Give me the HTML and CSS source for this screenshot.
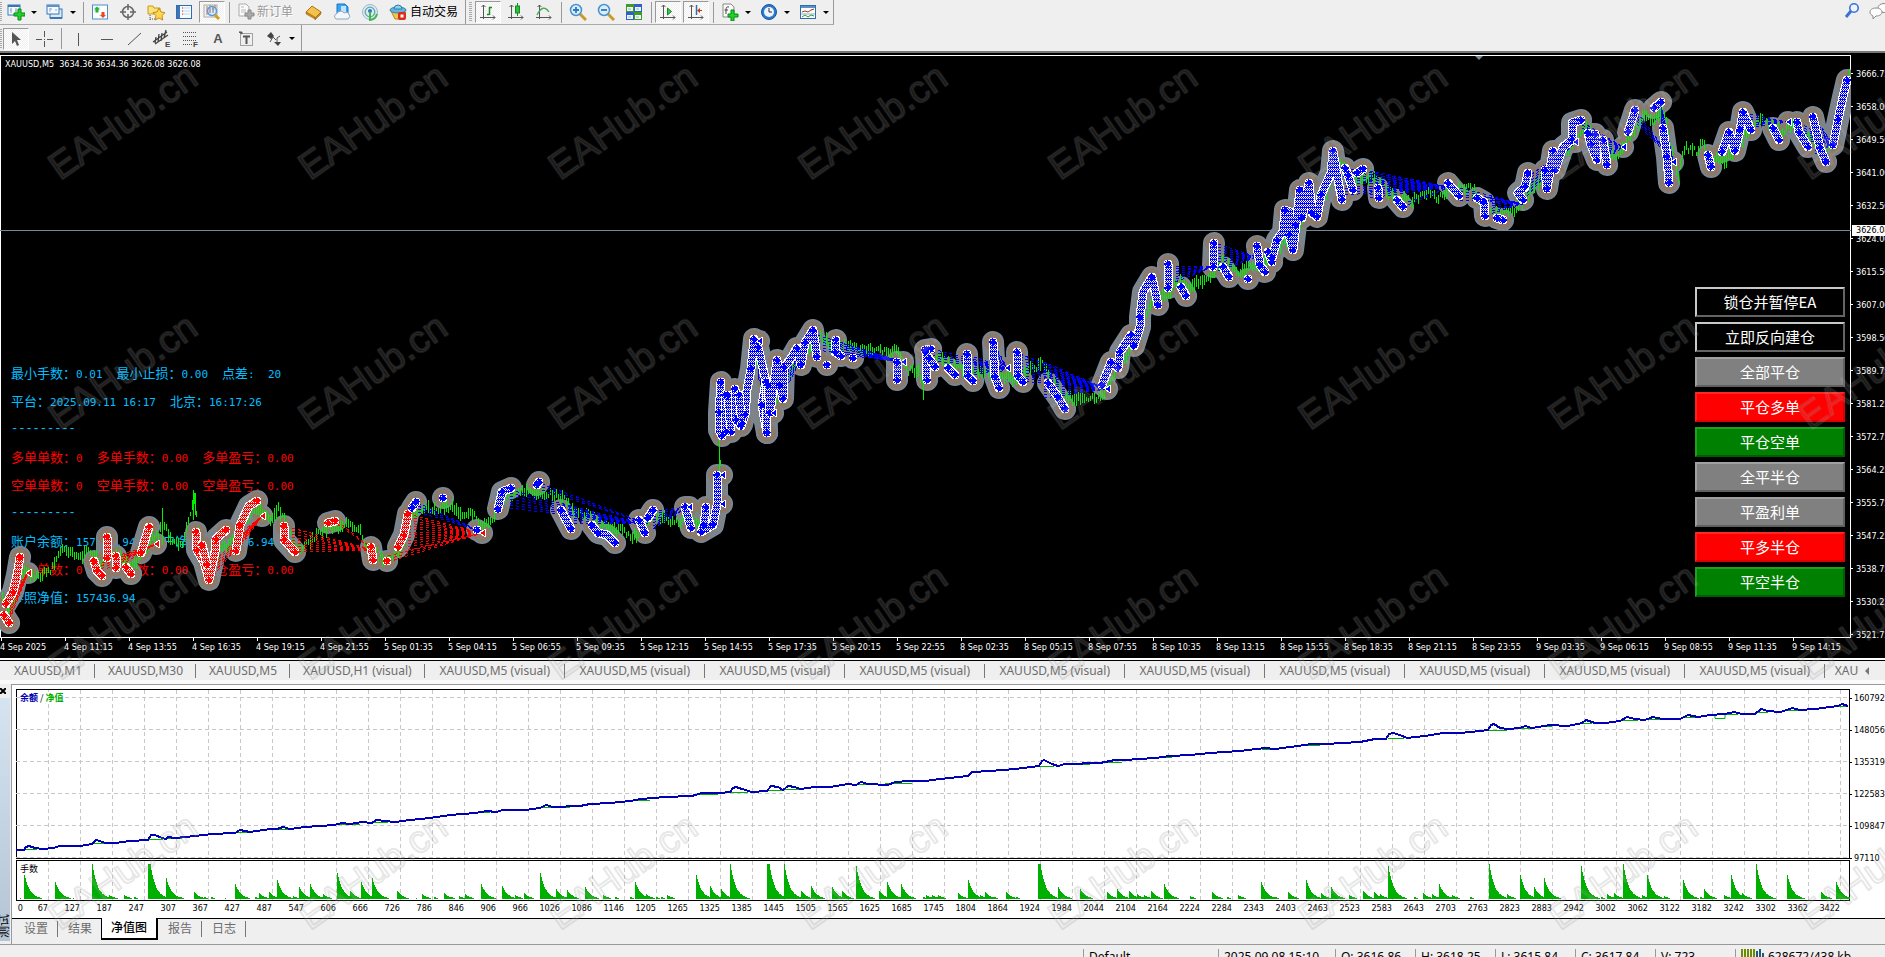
FILE: index.html
```html
<!DOCTYPE html>
<html lang="zh-CN">
<head>
<meta charset="utf-8">
<title>XAUUSD,M5</title>
<link rel="stylesheet" href="styles.css">
</head>
<body>
<header class="toolbars">
  <div class="bar bar-main">
    <div class="group">
      <i class="grip"></i>
      <button class="tool tool-drop" aria-label="新图表"><svg width="18" height="18" viewBox="0 0 18 18"><rect x="1" y="2" width="12" height="10" fill="#f4faff" stroke="#3b77b5"/><path d="M1 3h12" stroke="#3b77b5" stroke-width="2"/><path d="M4 5v5M9 5v5M3 7h2M8 8h2" stroke="#8aa7c4"/><path d="M11 6h3v4h4v3h-4v4h-3v-4H7v-3h4z" fill="#1fd32b" stroke="#078a12"/></svg><i class="caret"></i></button>
      <button class="tool tool-drop" aria-label="配置文件"><svg width="18" height="18" viewBox="0 0 18 18"><rect x="4" y="6" width="12" height="9" fill="#dcebfa" stroke="#3b77b5"/><path d="M4 15h12" stroke="#3b77b5" stroke-width="2"/><rect x="1" y="2" width="12" height="9" fill="#f4faff" stroke="#3b77b5"/><path d="M1 3h12" stroke="#5a92cc" stroke-width="2"/><path d="M4 5v4M4 6h2M9 7h2" stroke="#8aa7c4"/></svg><i class="caret"></i></button>
      <i class="sep"></i>
      <button class="tool" aria-label="市场报价"><svg width="18" height="18" viewBox="0 0 18 18"><rect x="1.500" y="2" width="15" height="14" fill="#fff" stroke="#4a90cf"/><path d="M3 5h6M3 8h5M8 12h6" stroke="#c9d6e2"/><path d="M6 3.500l3 3H7.500v3h-3v-3H3z" fill="#21b53a"/><path d="M12 15l-3-3h1.500V9h3v3H15z" fill="#e8481c"/></svg></button>
      <button class="tool" aria-label="数据窗口"><svg width="18" height="18" viewBox="0 0 18 18" fill="none" stroke="#666"><circle cx="9" cy="9" r="5.500" stroke-width="1.500"/><path d="M9 1v6M9 11v6M1 9h6M11 9h6" stroke-width="1.500"/></svg></button>
      <button class="tool" aria-label="导航"><svg width="18" height="18" viewBox="0 0 18 18"><path d="M1 3h5l1 2h6v6H1z" fill="#fbe27a" stroke="#c79a1e"/><path d="M3 12v5M3 16h5" stroke="#555" stroke-dasharray="1 1"/><path d="M12 5l2 4 4 .6-3 3 .7 4.400-3.700-2-3.700 2 .7-4.400-3-3 4-.6z" fill="#ffd84d" stroke="#c98a12"/></svg></button>
      <button class="tool" aria-label="终端"><svg width="18" height="18" viewBox="0 0 18 18"><rect x="1.500" y="2.500" width="15" height="13" fill="#f7fbff" stroke="#2f6cad"/><path d="M2 3h3v12H2z" fill="#3c76b9"/><path d="M7 5h8M7 8h8M7 11h8" stroke="#c2d5e8"/><path d="M7 5h1M7 8h1M7 11h1" stroke="#c33"/></svg></button>
      <button class="tool pressed" aria-label="策略测试"><svg width="18" height="18" viewBox="0 0 18 18"><rect x="1" y="2" width="13" height="12" fill="#f6f1ec" stroke="#b6aaa2"/><path d="M4 3v9M7 2v7M12 2v5" stroke="#9a7d77"/><circle cx="9" cy="8" r="4.500" fill="#cfe7fb" fill-opacity=".7" stroke="#5b9bd8" stroke-width="1.500"/><path d="M7 5v5M10 4v6M9 6h2" stroke="#8a7d87"/><path d="M12 12l4 4" stroke="#d59f1e" stroke-width="3"/></svg></button>
      <i class="sep"></i>
      <button class="tool tool-text" disabled><svg width="18" height="18" viewBox="0 0 18 18"><path d="M2 1h7l3 3v9H2z" fill="#fafafa" stroke="#aaa"/><path d="M4 4h3M4 7h5M4 9h5" stroke="#bbb"/><path d="M11 7h3v3h3v3h-3v3h-3v-3H8v-3h3z" fill="#aaa" stroke="#888"/></svg><span>新订单</span></button>
      <button class="tool" aria-label="语言编辑器"><svg width="18" height="18" viewBox="0 0 18 18"><path d="M7 3l9 6-6 6-9-6z" fill="#f3c24a" stroke="#a8741a"/><path d="M1 9v2l9 5v-2zM10 15l6-6v2l-6 6z" fill="#c88a22" stroke="#95630f" stroke-width=".5"/></svg></button>
      <button class="tool" aria-label="云"><svg width="18" height="18" viewBox="0 0 18 18"><path d="M4 1h8l3 3v7H4z" fill="#38a3ef" stroke="#1a76c4"/><path d="M8 3h5v7H8z" fill="#bfe3ff"/><path d="M3 16a3 3 0 0 1 1-5.500 4 4 0 0 1 7-.5 3 3 0 0 1 4 6z" fill="#f4f7fb" stroke="#8fa7c2"/></svg></button>
      <button class="tool" aria-label="信号"><svg width="18" height="18" viewBox="0 0 18 18" fill="none"><circle cx="9" cy="9" r="7.500" fill="#dcebf3" stroke="#9fb9cc"/><circle cx="9" cy="9" r="4.800" stroke="#5fa8a0" stroke-width="1.300"/><circle cx="9" cy="8" r="2" fill="#3178c6"/><path d="M9 9v8a8 8 0 0 0 7-6" stroke="#41b649" stroke-width="2"/></svg></button>
      <button class="tool tool-text tool-auto"><svg width="18" height="18" viewBox="0 0 18 18"><path d="M2 8l4 8h6l5-7z" fill="#f1c94a" stroke="#b4861b"/><ellipse cx="9" cy="7" rx="8" ry="3" fill="#69b4dc" stroke="#2f81ad"/><path d="M5 6a4 4 0 0 1 8 0z" fill="#8fd0ef" stroke="#2f81ad"/><rect x="9" y="9" width="8" height="8" rx="2" fill="#dd2d16"/><rect x="11.500" y="11.500" width="3" height="3" fill="#fff"/></svg><span>自动交易</span></button>
    </div>
    <div class="group">
      <i class="grip"></i>
      <button class="tool pressed" aria-label="柱状图"><svg width="18" height="18" viewBox="0 0 18 18" fill="none"><path d="M4.500 2v14M1 14.500h15M2.500 4l2-2 2 2M14 12.500l2 2-2 2" stroke="#555"/><path d="M10.500 4v8M10 4.500h3M8 11.500h2" stroke="#188a22" stroke-width="1.500"/></svg></button>
      <button class="tool" aria-label="蜡烛图"><svg width="18" height="18" viewBox="0 0 18 18" fill="none"><path d="M4.500 2v14M1 14.500h15M2.500 4l2-2 2 2M14 12.500l2 2-2 2" stroke="#555"/><path d="M10.500 0v13" stroke="#188a22"/><rect x="8.500" y="3" width="4" height="7" fill="#25c437" stroke="#188a22"/></svg></button>
      <button class="tool" aria-label="折线图"><svg width="18" height="18" viewBox="0 0 18 18" fill="none"><path d="M4.500 2v14M1 14.500h15M2.500 4l2-2 2 2M14 12.500l2 2-2 2" stroke="#555"/><path d="M2 12q6-12 12-3" stroke="#4ba852" stroke-width="1.300"/></svg></button>
      <i class="sep"></i>
      <button class="tool" aria-label="放大"><svg width="18" height="18" viewBox="0 0 18 18"><path d="M11 11l6 6" stroke="#c99a27" stroke-width="3"/><circle cx="7" cy="7" r="5.500" fill="#d9eefb" stroke="#4a90cf" stroke-width="1.500"/><path d="M4 7h6M7 4v6" stroke="#2f79bd" stroke-width="1.800"/></svg></button>
      <button class="tool" aria-label="缩小"><svg width="18" height="18" viewBox="0 0 18 18"><path d="M11 11l6 6" stroke="#c99a27" stroke-width="3"/><circle cx="7" cy="7" r="5.500" fill="#d9eefb" stroke="#4a90cf" stroke-width="1.500"/><path d="M4 7h6" stroke="#2f79bd" stroke-width="1.800"/></svg></button>
      <button class="tool" aria-label="平铺"><svg width="18" height="18" viewBox="0 0 18 18"><path d="M1 1h8v8H1zM9 9h8v8H9z" fill="#3f9b28"/><path d="M9 1h8v8H9zM1 9h8v8H1z" fill="#2d62c4"/><path d="M2 4h6v4H2zM10 4h6v4h-6zM2 12h6v4H2zM10 12h6v4h-6z" fill="#eef5fb"/><path d="M3 6h3M11 6h3M3 14h3M11 14h3" stroke="#9bb"/></svg></button>
      <i class="sep"></i>
      <button class="tool pressed" aria-label="自动滚动"><svg width="18" height="18" viewBox="0 0 18 18" fill="none"><path d="M4.500 2v14M1 14.500h15M2.500 4l2-2 2 2M14 12.500l2 2-2 2" stroke="#555"/><path d="M8.500 5l4 3.500-4 3.500z" fill="#36c947" stroke="#188a22"/></svg></button>
      <button class="tool pressed" aria-label="图表平移"><svg width="18" height="18" viewBox="0 0 18 18" fill="none"><path d="M4.500 2v14M1 14.500h15M2.500 4l2-2 2 2M14 12.500l2 2-2 2" stroke="#555"/><path d="M9.500 2v10" stroke="#2f6cad" stroke-width="1.500"/><path d="M15 7.500h-3" stroke="#c33d10"/><path d="M13 5v5l-3-2.500z" fill="#c33d10"/></svg></button>
      <i class="sep"></i>
      <button class="tool tool-drop" aria-label="指标"><svg width="18" height="18" viewBox="0 0 18 18"><path d="M2 1h8l3 3v10H2z" fill="#fafafa" stroke="#888"/><path d="M8 4q-3-1-3 3v4M3.500 7H7" fill="none" stroke="#444"/><path d="M10 7h3v4h4v3h-4v4h-3v-4H7v-3h3z" fill="#1fd32b" stroke="#078a12"/></svg><i class="caret"></i></button>
      <button class="tool tool-drop" aria-label="周期"><svg width="18" height="18" viewBox="0 0 18 18"><circle cx="9" cy="9" r="7.500" fill="#2b7ad2" stroke="#15549d"/><circle cx="9" cy="9" r="5" fill="#edf5fc"/><path d="M9 5v4h3" fill="none" stroke="#333"/></svg><i class="caret"></i></button>
      <button class="tool tool-drop" aria-label="模板"><svg width="18" height="18" viewBox="0 0 18 18" fill="none"><rect x="1.500" y="2.500" width="15" height="13" fill="#fff" stroke="#2f6cad"/><path d="M2 4h14" stroke="#5a92cc" stroke-width="2"/><path d="M3 9l3-1 3 1 3-2 3-1" stroke="#a33b1b"/><path d="M2 11h14" stroke="#9ab"/><path d="M3 14l3-2 3 2 3-2 3 1" stroke="#2b9b3b"/></svg><i class="caret"></i></button>
    </div>
    <div class="corner">
      <button class="tool" aria-label="搜索"><svg width="18" height="18" viewBox="0 0 18 18" fill="none"><circle cx="11" cy="6" r="4.200" fill="#eef4ff" stroke="#3a72d4" stroke-width="1.600"/><path d="M8 9l-5 6" stroke="#3a72d4" stroke-width="3"/></svg></button>
      <button class="tool" aria-label="消息"><svg width="22" height="18" viewBox="0 0 22 18" fill="#fdfdfd" stroke="#8a8a8a"><ellipse cx="15" cy="6" rx="6" ry="4.500"/><path d="M7 6c4 0 6 2 6 4s-2 4-6 4l-3 3v-3c-2-1-3-2-3-4s2-4 6-4z"/></svg></button>
    </div>
  </div>
  <div class="bar bar-draw">
    <div class="group">
      <i class="grip"></i>
      <button class="tool pressed" aria-label="光标"><svg width="18" height="18" viewBox="0 0 18 18"><path d="M5 2v12l3-3 2 5 2-1-2-5h4z" fill="#555"/></svg></button>
      <button class="tool" aria-label="十字线"><svg width="18" height="18" viewBox="0 0 18 18" stroke="#555"><path d="M9.500 1v6M9.500 11v6M1 9.500h6M12 9.500h6M9 9.500h1"/></svg></button>
      <i class="sep"></i>
      <button class="tool" aria-label="垂直线"><svg width="18" height="18" viewBox="0 0 18 18" stroke="#555"><path d="M9.500 3v13"/></svg></button>
      <button class="tool" aria-label="水平线"><svg width="18" height="18" viewBox="0 0 18 18" stroke="#555"><path d="M4 9.500h12"/></svg></button>
      <button class="tool" aria-label="趋势线"><svg width="18" height="18" viewBox="0 0 18 18" stroke="#555"><path d="M3 15L16 3"/></svg></button>
      <button class="tool" aria-label="等距通道"><svg width="20" height="20" viewBox="0 0 20 20" stroke="#444"><path d="M1 13L15 3M3 15L16 6M4 8l-1 6M7 5l-1 8M10 4l-1 8M14 1l-2 8" stroke-width="1.300"/><text x="13" y="18" class="tiny">E</text></svg></button>
      <button class="tool" aria-label="斐波纳契"><svg width="20" height="20" viewBox="0 0 20 20" stroke="#555"><path d="M3 3.500h14M3 7.500h14M3 11.500h14M3 15.500h9" stroke-dasharray="1 1"/><text x="13" y="18" class="tiny">F</text></svg></button>
      <button class="tool glyph">A</button>
      <button class="tool" aria-label="文本标签"><svg width="18" height="18" viewBox="0 0 18 18" fill="none" stroke="#555"><rect x="3.500" y="3.500" width="12" height="12" stroke-dasharray="1 1"/><path d="M6 6.500h7M9.500 6v8" stroke-width="2"/><path d="M2 2h3v2z" fill="#555"/></svg></button>
      <button class="tool tool-drop" aria-label="箭头"><svg width="18" height="18" viewBox="0 0 18 18"><path d="M2 6l4-4 3 4-3 3zM9 12h7l-3 4z" fill="#444"/><path d="M5 12l3-5 3 3M12 13V8l3-2" stroke="#555" fill="none"/></svg><i class="caret"></i></button>
    </div>
  </div>
</header>

<main class="chart">
  <section class="plot">
    <p class="quote">XAUUSD,M5&nbsp; 3634.36 3634.36 3626.08 3626.08</p>
    <div class="info">
      <p><span>最小手数：<b>0.01</b></span><span>最小止损：<b>0.00</b></span><span>点差<b>:&nbsp; 20</b></span></p>
      <p><span>平台：<b>2025.09.11 16:17</b></span><span>北京：<b>16:17:26</b></span></p>
      <p class="rule">---------</p>
      <p class="hot"><span>多单单数：<b>0</b></span><span>多单手数：<b>0.00</b></span><span>多单盈亏：<b>0.00</b></span></p>
      <p class="hot"><span>空单单数：<b>0</b></span><span>空单手数：<b>0.00</b></span><span>空单盈亏：<b>0.00</b></span></p>
      <p class="rule">---------</p>
      <p><span>账户余额：<b>157436.94</b></span><span>账户净值：<b>157436.94</b></span></p>
      <p class="hot"><span>持仓单数：<b>0</b></span><span>持仓手数：<b>0.00</b></span><span>持仓盈亏：<b>0.00</b></span></p>
      <p><span>参照净值：<b>157436.94</b></span></p>
    </div>
    <svg class="trades" id="trades" viewBox="0 55 1851 583" preserveAspectRatio="none">
      <defs>
        <pattern id="blueMesh" width="2" height="4" patternUnits="userSpaceOnUse"><path d="M0 0h2v4H0z" fill="#fff"/><path d="M0 0h1v1H0zM1 1h1v1H1zM0 2h1v1H0zM0 3h2v1H0z" fill="#00f"/></pattern>
        <pattern id="redMesh" width="2" height="4" patternUnits="userSpaceOnUse"><path d="M0 0h2v4H0z" fill="#fff"/><path d="M0 0h1v1H0zM1 1h1v1H1zM0 2h1v1H0zM0 3h2v1H0z" fill="#f00"/></pattern>
        <pattern id="haloMesh" width="3" height="3" patternUnits="userSpaceOnUse"><path d="M0 0h3v3H0z" fill="#778899"/><path d="M0 0h1v1H0zM1 1h1v1H1zM2 2h1v1H2z" fill="#8b7969"/></pattern>
      </defs>
      <path d="M0 230.500H1851" stroke="#778899"/>
      <path d="M1475 56h8l-4 4z" fill="#778899"/>
    </svg>
    <div class="orders">
      <button class="order dark">锁仓并暂停EA</button>
      <button class="order dark">立即反向建仓</button>
      <button class="order gray">全部平仓</button>
      <button class="order red">平仓多单</button>
      <button class="order green">平仓空单</button>
      <button class="order gray">全平半仓</button>
      <button class="order gray">平盈利单</button>
      <button class="order red">平多半仓</button>
      <button class="order green">平空半仓</button>
    </div>
  </section>
  <div class="prices" id="prices"><b class="now">3626.08</b></div>
  <div class="times" id="times"></div>
</main>

<nav class="charts-tabs" id="chartTabs"></nav>

<section class="tester">
  <aside class="side"><button class="close" aria-label="关闭"><svg width="6" height="6" viewBox="0 0 6 6"><path d="M0 0l6 6M6 0L0 6" stroke="#000" stroke-width="2"/></svg></button><div class="side-title"><span>测试</span></div></aside>
  <div class="tester-body">
    <div class="graph">
      <div class="equity">
        <svg id="equity" viewBox="16 689 1834 170" preserveAspectRatio="none"></svg>
        <p class="legend"><span class="bal">余额</span> / <span class="eq">净值</span></p>
      </div>
      <div class="levels"><span>160792</span><span>148056</span><span>135319</span><span>122583</span><span>109847</span><span>97110</span></div>
      <div class="lots">
        <svg id="lots" viewBox="16 860 1834 41" preserveAspectRatio="none"></svg>
        <p class="legend">手数</p>
      </div>
      <div class="counts" id="counts"></div>
    </div>
    <nav class="tester-tabs">
      <button>设置</button><button>结果</button><button class="active">净值图</button><button>报告</button><button>日志</button>
    </nav>
  </div>
</section>

<footer class="status">
  <span class="w1">Default</span><span class="w2">2025.09.08 15:10</span><span class="w3">O: 3616.86</span><span class="w3">H: 3618.25</span><span class="w3">L: 3615.84</span><span class="w3">C: 3617.84</span><span class="w3">V: 723</span><span class="w4"><svg width="24" height="12" viewBox="0 0 24 12"><path d="M1 0v12M4 0v12M7 0v12M10 0v12M13 0v12" stroke="#6b8e00" stroke-width="2"/><path d="M16 2v10M19 0v12M22 4v8" stroke="#1f5a78" stroke-width="2"/></svg>628672/438 kb</span>
</footer>

<svg class="marks" id="marks" aria-hidden="true"></svg>
<script src="app.js"></script>
</body>
</html>
```
FILE: styles.css
```css
* { box-sizing: border-box; }
body {
  margin: 0;
  height: 100vh;
  overflow: hidden;
  position: relative;
  display: flex;
  flex-direction: column;
  background: #efefef;
  color: #000;
  font: 12px/16px "Noto Sans", "Noto Sans CJK SC", sans-serif;
}
p { margin: 0; }
button {
  margin: 0;
  padding: 0;
  border: 0;
  background: none;
  color: inherit;
  font: inherit;
}

/* toolbars */
.toolbars { flex: none; border-bottom: 2px solid #777; }
.bar { display: flex; }
.bar-main { height: 25px; }
.bar-draw { height: 26px; }
.group {
  display: flex;
  align-items: center;
  border-right: 1px solid #999;
  border-bottom: 1px solid #aaa;
}
.bar-main .group + .group { padding-left: 3px; }
.bar-draw .group { border-bottom: 0; padding-right: 2px; padding-top: 1px; }
.grip { width: 2px; height: 20px; background: repeating-linear-gradient(#aaa 0 1px, #efefef 1px 2px); }
.bar-main .group + .group .grip { width: 3px; margin-right: 2px; }
.tool {
  display: flex;
  align-items: center;
  justify-content: center;
  flex: none;
  width: 28px;
  height: 22px;
}
.tool svg { display: block; flex: none; }
.pressed {
  width: 26px;
  margin: 0 1px;
  background: repeating-conic-gradient(#fff 0 25%, #efefef 0 50%) 0 0 / 2px 2px;
  border: 1px solid #fff;
  border-top-color: #999;
  border-left-color: #999;
}
.tool-drop { width: 39px; justify-content: flex-start; padding-left: 5px; gap: 6px; }
.caret { border: 3px solid transparent; border-top-color: #000; border-bottom: 0; }
.sep { width: 1px; height: 21px; margin: 0 2px 0 3px; background: #999; }
.tool-text { width: 68px; justify-content: flex-start; padding-left: 5px; gap: 2px; }
.tool-text:disabled { color: #999; text-shadow: 1px 1px #fff; }
.tool-auto { width: 81px; gap: 3px; }
.tiny { font: bold 8px "Liberation Sans", sans-serif; fill: #444; stroke: none; }
.glyph { font: bold 13px "Liberation Sans", sans-serif; color: #555; }
.corner { display: flex; margin-left: auto; margin-right: -9px; }

/* price chart */
.chart {
  flex: 1;
  min-height: 0;
  display: grid;
  grid-template: minmax(0, 1fr) 20px / minmax(0, 1fr) 34px;
  padding-top: 2px;
  background: #000;
  color: #fff;
  font: 9px/12px "DejaVu Sans Condensed", "DejaVu Sans", sans-serif;
}
.plot { position: relative; border: 1px solid #fff; }
.quote { padding: 2px 4px; }
.trades { position: absolute; inset: -1px; width: calc(100% + 2px); height: calc(100% + 2px); }
.info {
  position: absolute;
  left: 10px;
  top: 303px;
  color: #00bfff;
  font: 13px/28px "Noto Sans CJK SC", sans-serif;
}
.info p { display: flex; gap: 14px; height: 28px; white-space: nowrap; }
.info b { font: 11px/26px "DejaVu Sans Mono", monospace; }
.info .hot { color: #f00; }
.info .rule { font: 12px/28px "Liberation Mono", monospace; }
.orders {
  position: absolute;
  top: 231px;
  right: 5px;
  display: grid;
  gap: 5px;
  width: 150px;
}
.order { height: 30px; border: 2px solid; color: #fff; font: 15px/24px "Noto Sans CJK SC", sans-serif; }
.dark { background: #000; border-color: #c8c8c8 #646464 #646464 #c8c8c8; }
.gray { background: #808080; border-color: #a0a0a0 #606060 #606060 #a0a0a0; }
.red { background: #f00; border-color: #ff2828 #d80000 #d80000 #ff2020; }
.green { background: #008000; border-color: #20a020 #006000 #006000 #20a020; }
.prices {
  position: relative;
  display: grid;
  grid-auto-rows: 33px;
  align-content: start;
  padding-top: 2px;
}
.prices span { display: flex; align-items: center; gap: 3px; }
.prices span::before { content: ""; width: 2px; height: 1px; background: #fff; }
.now { position: absolute; top: 170px; left: 1px; right: 0; height: 11px; padding-left: 4px; background: #fff; color: #000; font-weight: 400; line-height: 11px; }
.times { grid-column: 1 / -1; display: flex; }
.times span { flex: 0 0 64px; white-space: nowrap; padding-top: 3px; position: relative; }
.times span::before { content: ""; position: absolute; left: 1px; top: 0; width: 1px; height: 3px; background: #fff; }

/* chart tabs */
.charts-tabs {
  flex: none;
  position: relative;
  display: flex;
  align-items: center;
  height: 26px;
  padding: 1px 26px 4px 1px;
  border-top: 2px solid #fff;
  box-shadow: inset 0 1px #000, inset 0 -4px #fafafa;
  overflow: hidden;
  color: #6d6d6d;
}
.charts-tabs button { flex: none; padding: 0 12px 0 13px; line-height: 14px; border-right: 1px solid #777; white-space: nowrap; }
.charts-tabs .visual { width: 140px; }
.charts-tabs button:last-of-type { flex: 1 1 0; min-width: 0; width: auto; overflow: hidden; padding: 0 0 0 10px; border: 0; text-align: left; }
.scroll-left { position: absolute; right: 16px; border: 4px solid transparent; border-right-color: #777; border-left: 0; }

/* tester */
.tester { flex: none; display: flex; height: 261px; border-bottom: 1px solid #999; }
.side { display: flex; flex-direction: column; width: 11px; flex: none; }
.close { height: 14px; display: flex; align-items: center; }
.side-title {
  flex: 1;
  margin: 0 1px 3px 0;
  background: linear-gradient(#d6e4f1, #b4c4d4);
  display: flex;
  align-items: flex-end;
  overflow: hidden;
}
.side-title span { writing-mode: vertical-rl; text-orientation: sideways; transform: rotate(180deg); font-size: 12px; line-height: 12px; padding-top: 3px; margin-left: -2px; }
.tester-body { flex: 1; min-width: 0; border-left: 1px solid #999; border-top: 1px solid #999; }
.graph {
  display: grid;
  grid-template: 170px 41px 16px / minmax(0, 1fr) 35px;
  row-gap: 1px;
  padding: 4px 0 0 4px;
  background: #fff;
  border-bottom: 1px solid #000;
  font: 9px/12px "DejaVu Sans Condensed", "DejaVu Sans", "Noto Sans CJK SC", sans-serif;
}
.equity, .lots { position: relative; border: 1px solid #000; }
.equity svg, .lots svg { position: absolute; inset: -1px; width: calc(100% + 2px); height: calc(100% + 2px); }
.legend { position: relative; width: max-content; margin: 2px 3px; background: #fff; font: 9px/12px "Noto Sans CJK SC", sans-serif; }
.bal { color: #0000b4; font-weight: 700; }
.eq { color: #00b000; font-weight: 700; }
.levels { display: grid; grid-auto-rows: 32px; align-content: start; margin: -7px 0 -20px; }
.levels span { display: flex; align-items: center; gap: 2px; }
.levels span::before { content: ""; width: 2px; height: 1px; background: #000; }
.lots { grid-column: 1; }
.counts { grid-column: 1 / -1; display: flex; }
.counts span { flex: 0 0 32px; text-align: right; }
.counts span:first-child { flex-basis: 7px; }
.counts span:nth-child(2) { flex-basis: 25px; }
.tester-tabs { display: flex; height: 21px; padding-left: 2px; color: #6d6d6d; }
.tester-tabs button { padding: 0 9px 0 10px; height: 16px; margin-top: 2px; border-right: 1px solid #777; }
.tester-tabs button:nth-child(2) { border-right: 0; }
.tester-tabs .active { height: 22px; margin-top: -1px; padding: 2px 9px; background: #fff; color: #000; border: 1px solid #000; border-top: 0; border-right-width: 2px; border-bottom-width: 2px; font-weight: 500; }

/* status bar */
.status { flex: none; display: flex; justify-content: flex-end; height: 12px; padding-top: 4px; }
.status span { flex: none; display: flex; gap: 3px; height: 20px; padding-left: 5px; border-left: 1px solid #999; white-space: nowrap; }
.w1 { width: 135px; }
.w2 { width: 117px; }
.w3 { width: 80px; }
.w4 { width: 150px; }

/* watermark */
.marks { position: absolute; inset: 0; width: 100%; height: 100%; pointer-events: none; }
.marks text {
  font: 38px "Liberation Sans", Arial, sans-serif;
  fill: rgba(255, 255, 255, .1);
  stroke: rgba(128, 128, 128, .2);
  stroke-width: 2px;
  stroke-linejoin: round;
}
```
FILE: app.js
```javascript
const NS = "http://www.w3.org/2000/svg";
const byId = id => document.getElementById(id);
function draw(parent, tag, attrs, text) {
  const el = document.createElementNS(NS, tag);
  for (const k in attrs) el.setAttribute(k, attrs[k]);
  if (text) el.textContent = text;
  parent.appendChild(el);
  return el;
}
function addText(parent, tag, text) {
  const el = document.createElement(tag);
  el.textContent = text;
  parent.appendChild(el);
  return el;
}
const points = s => s.trim().split(/\s+/).map(p => p.split(",").map(Number));
const toPath = pts => "M" + pts.map(p => p.join(" ")).join("L");

/* axis labels */
"3666.75 3658.00 3649.50 3641.00 3632.50 3624.00 3615.50 3607.00 3598.50 3589.75 3581.25 3572.75 3564.25 3555.75 3547.25 3538.75 3530.25 3521.75"
  .split(" ").forEach(t => byId("prices").insertBefore(Object.assign(document.createElement("span"), { textContent: t }), byId("prices").lastElementChild));
const days = {
  "4 Sep": "2025 11:15 13:55 16:35 19:15 21:55",
  "5 Sep": "01:35 04:15 06:55 09:35 12:15 14:55 17:35 20:15 22:55",
  "8 Sep": "02:35 05:15 07:55 10:35 13:15 15:55 18:35 21:15 23:55",
  "9 Sep": "03:35 06:15 08:55 11:35 14:15"
};
for (const d in days) days[d].split(" ").forEach(t => addText(byId("times"), "span", d + " " + t));
"0 67 127 187 247 307 367 427 487 547 606 666 726 786 846 906 966 1026 1086 1146 1205 1265 1325 1385 1445 1505 1565 1625 1685 1745 1804 1864 1924 1984 2044 2104 2164 2224 2284 2343 2403 2463 2523 2583 2643 2703 2763 2823 2883 2942 3002 3062 3122 3182 3242 3302 3362 3422"
  .split(" ").forEach(t => addText(byId("counts"), "span", t));

/* chart tabs */
["XAUUSD,M1", "XAUUSD,M30", "XAUUSD,M5", "XAUUSD,H1 (visual)"]
  .forEach(t => addText(byId("chartTabs"), "button", t));
for (let i = 0; i < 10; i++) addText(byId("chartTabs"), "button", "XAUUSD,M5 (visual)").className = "visual";
addText(byId("chartTabs"), "button", "XAUUSD,M5 (visual)");
addText(byId("chartTabs"), "i", "").className = "scroll-left";

/* trades: runs of entries, r = red, b = blue; "<" marks an exit */
const runs = [
  ["r", "4,615 9,623"], ["r", "6,604 13,592 17,575 20,557"], ["r<", "28,573"],
  ["r", "94,561 97,571 102,576"], ["r", "107,537 107,558"], ["r", "116,556 116,568"],
  ["r", "126,567 131,574"], ["r", "141,553 149,527"], ["r<", "156,544"],
  ["r", "196,532 197,550 204,562 209,580 215,552 216,539 226,530"], ["r", "202,545 207,565"],
  ["r", "236,551 240,525 249,506 257,501"], ["r<", "262,516"],
  ["r", "284,526 284,540 295,552"], ["r", "328,523 335,521"], ["r", "371,547 373,560"], ["r", "387,561"],
  ["r", "398,547 404,535 408,514"], ["b", "412,508 416,502"],
  ["b", "443,498"], ["b", "477,530"], ["r<", "482,533"],
  ["b", "498,509 502,492 511,488"], ["b", "537,485 539,482"], ["b", "561,510 571,529"],
  ["b", "592,525 598,533 607,535 615,543"], ["b", "639,520 645,533"], ["b", "648,518 653,510"],
  ["b", "685,507 691,528"], ["b<", "689,507"],
  ["b", "706,507 704,525 701,532 713,525 717,505 717,475"], ["b<", "722,475"], ["b<", "722,504"],
  ["b", "721,382 719,412 719,430 722,436"], ["b", "725,395 726,432"], ["b", "728,395 731,432"],
  ["b", "735,389 736,420 741,426 745,415 747,390 751,369 754,339 758,347 766,382 762,405 767,433"],
  ["b", "766,382 767,433"], ["b", "739,395 742,424"],
  ["b", "768,385 770,413 777,360 780,385 783,399 784,367 790,360 797,348 801,365 805,343 813,330 817,357"], ["b<", "773,413"], ["b<", "759,341"],
  ["b", "827,365"], ["b", "836,340 835,352 841,356"], ["b", "853,358"],
  ["b", "897,362 897,380"], ["b<", "903,362"], ["b", "925,350 931,349"], ["b", "926,352 927,380"], ["b", "929,358 935,367"],
  ["b", "948,368 955,375"], ["b", "967,354 968,376 973,381"], ["b", "993,342 995,377 999,388"], ["b<", "1007,368"],
  ["b", "1017,352 1018,376 1023,382"], ["b", "1048,383 1058,397 1065,409"],
  ["b<", "1107,389"], ["b", "1102,385 1111,362 1118,368 1120,352 1131,335 1134,346 1140,327 1140,317 1143,292 1152,277 1158,305"],
  ["b", "1168,264 1168,288"], ["b", "1181,287 1186,296"], ["b", "1214,243 1213,267"], ["b", "1223,267 1229,277"],
  ["b", "1248,279"], ["b", "1257,246 1260,265 1265,272"], ["b", "1268,252 1272,262"],
  ["b", "1272,258 1277,240 1283,232 1285,210 1290,212 1289,235 1293,250 1296,225 1300,190 1302,218 1309,183 1312,213 1317,217 1321,195 1331,173 1333,151 1338,180 1342,200"],
  ["b", "1345,168 1348,175 1353,190"], ["b", "1357,173 1363,169"],
  ["b", "1378,188 1379,198"], ["b", "1397,200 1403,207"], ["b", "1448,183 1459,196"],
  ["b", "1477,198 1484,202 1485,216"], ["b", "1497,218 1503,220"],
  ["b", "1528,173 1525,187 1518,193 1523,200"], ["b", "1545,170 1547,189 1553,151 1555,170 1563,147 1572,140 1572,123 1581,120"],
  ["b<", "1575,142"], ["b", "1588,133 1591,145 1597,160 1595,134"], ["b", "1603,140 1607,165"],
  ["b<", "1623,147"], ["b", "1628,132 1635,110"], ["b", "1654,108 1661,102"],
  ["b", "1663,128 1667,157 1669,183"], ["b<", "1673,162"], ["b", "1708,155 1711,167"],
  ["b", "1722,152 1729,132 1735,151 1740,130 1743,112 1751,130"],
  ["b", "1773,128 1779,140"], ["b<", "1788,122"], ["b", "1797,122 1799,132 1808,147"],
  ["b", "1813,117 1820,148 1826,162"], ["b", "1833,145 1838,120 1843,97 1847,80"]
].map(([kind, s]) => ({ color: kind[0] === "r" ? "red" : "blue", exit: kind[1] === "<", pts: points(s) }));

const svg = byId("trades");
const isPivot = (pts, i) => i === 0 || i === pts.length - 1 ||
  (pts[i][1] - pts[i - 1][1]) * (pts[i + 1][1] - pts[i][1]) < 0;

const halo = draw(svg, "g", { fill: "none", "stroke-linejoin": "round", "stroke-linecap": "round" });
runs.forEach(r => draw(halo, "path", { d: toPath(r.pts) + "h.1", stroke: "#778899", "stroke-width": 22 }));
runs.forEach(r => draw(halo, "path", { d: toPath(r.pts) + "h.1", stroke: "url(#haloMesh)", "stroke-width": 20 }));
runs.forEach(r => r.pts.forEach((p, i) => {
  if (isPivot(r.pts, i)) draw(halo, "circle", { cx: p[0], cy: p[1], r: 9, fill: "#8b7969" });
}));

/* price bars */
const price = points(`1,600 6,606 10,612 16,590 20,575 26,570 35,577 50,570 58,555 63,548 72,552 80,557 90,550 100,565
 108,550 120,560 132,568 142,553 150,538 158,535 162,520 170,538 182,545 187,522 194,500 200,545 210,575 220,550 232,540
 245,520 258,508 270,520 278,507 286,525 296,550 310,540 317,535 330,527 347,525 360,528 364,543 372,555 390,560 400,550
 412,515 425,510 440,508 453,507 463,515 470,510 480,527 492,520 500,500 515,492 530,493 547,493 563,497 575,512 587,513
 600,525 620,530 633,538 645,525 655,513 667,520 677,522 690,517 703,525 714,520 719,480 723,420 740,400 755,352 767,420
 780,385 800,355 820,337 835,347 847,345 858,352 870,348 885,353 897,350 907,370 918,373 923,383 932,357 943,360 960,368
 983,373 995,372 1013,380 1030,370 1043,363 1050,380 1062,395 1070,397 1083,400 1100,397 1112,375 1128,352 1142,325 1155,292
 1167,297 1177,280 1188,287 1198,283 1210,275 1222,260 1237,272 1250,267 1265,262 1280,245 1296,235 1310,200 1325,195
 1337,160 1350,180 1373,177 1390,193 1410,202 1428,192 1437,200 1443,193 1455,190 1470,188 1485,205 1490,212 1507,212
 1517,210 1530,190 1548,172 1560,158 1575,140 1585,125 1600,145 1610,152 1617,157 1627,137 1643,117 1650,120 1663,110
 1668,135 1678,177 1683,148 1690,148 1697,152 1703,140 1708,158 1723,162 1738,145 1753,123 1763,120 1770,125 1780,133
 1795,125 1810,140 1825,155 1840,115 1849,78`);
let seed = 7;
const rnd = () => (seed = (seed * 16807) % 2147483647) / 2147483647;
let bars = "M719.5 440V473M923.5 378V400M193.500 490V520M195.500 493V515M162.500 508V545M1849.500 69V80";
for (let i = 1; i < price.length; i++) {
  const [x0, y0] = price[i - 1], [x1, y1] = price[i];
  for (let x = x0 + (x0 % 2); x < x1; x += 2) {
    const y = y0 + (y1 - y0) * (x - x0) / (x1 - x0) + rnd() * 6 - 3;
    const h = 2 + rnd() * 5;
    bars += `M${x + .5} ${Math.round(y - h)}V${Math.round(y + h)}`;
  }
}
draw(svg, "path", { d: bars, stroke: "#00f000", fill: "none", "shape-rendering": "crispEdges" });

/* dotted links from entries (x, y range) to the exit (x, y) */
const fans = [
  ["red", 10, 595, 620, 28, 573], ["red", 96, 565, 575, 156, 544], ["red", 116, 556, 568, 156, 544], ["red", 210, 565, 580, 262, 516],
  ["red", 238, 535, 551, 262, 516], ["red", 292, 528, 552, 374, 550], ["red", 337, 521, 524, 374, 550],
  ["red", 388, 556, 562, 482, 533], ["red", 408, 514, 550, 482, 533],
  ["blue", 418, 503, 512, 480, 531], ["blue", 510, 490, 510, 640, 524], ["blue", 542, 484, 492, 648, 524],
  ["blue", 562, 505, 525, 648, 524], ["blue", 653, 511, 530, 688, 507], ["blue", 706, 515, 530, 722, 504],
  ["blue", 758, 345, 380, 773, 413], ["blue", 784, 375, 395, 815, 332], ["blue", 817, 335, 350, 903, 362],
  ["blue", 838, 342, 354, 903, 362], ["blue", 932, 349, 362, 1007, 368], ["blue", 968, 355, 378, 1007, 368],
  ["blue", 995, 345, 375, 1007, 368], ["blue", 1020, 354, 382, 1107, 389], ["blue", 1044, 362, 400, 1107, 389],
  ["blue", 1170, 266, 286, 1213, 267], ["blue", 1218, 244, 272, 1257, 257], ["blue", 1335, 155, 175, 1352, 185],
  ["blue", 1345, 168, 196, 1450, 187], ["blue", 1370, 171, 198, 1450, 187], ["blue", 1403, 204, 207, 1450, 187],
  ["blue", 1460, 188, 200, 1523, 204], ["blue", 1486, 197, 216, 1523, 204],
  ["blue", 1527, 178, 196, 1575, 142], ["blue", 1582, 122, 130, 1623, 147], ["blue", 1603, 140, 162, 1623, 147],
  ["blue", 1637, 112, 126, 1673, 160], ["blue", 1661, 104, 150, 1673, 160], ["blue", 1722, 148, 155, 1743, 130],
  ["blue", 1744, 113, 130, 1788, 122], ["blue", 1799, 122, 140, 1833, 144], ["blue", 1815, 118, 155, 1833, 144],
  ["blue", 1835, 130, 145, 1849, 85]
];
fans.forEach(([color, x, top, bottom, ex, ey]) => {
  let d = "";
  for (let y = top; y <= bottom; y += 3) d += `M${x} ${y}L${ex} ${ey}`;
  draw(svg, "path", { d, stroke: color, "stroke-dasharray": "3 3", "shape-rendering": "crispEdges" });
});

/* entry columns and arrows */
const core = draw(svg, "g", { fill: "none", "stroke-linejoin": "round", "shape-rendering": "crispEdges" });
runs.filter(r => !r.exit).forEach(r => {
  const d = toPath(r.pts) + "h.1";
  draw(core, "path", { d, stroke: "#fff", "stroke-width": 9, "stroke-linecap": "round" });
  draw(core, "path", { d, stroke: `url(#${r.color}Mesh)`, "stroke-width": 7, "stroke-linecap": "round" });
});
runs.forEach(r => r.pts.forEach((p, i) => {
  const shape = r.exit ? "m3-4v8l-5-4z" : "m-4-1h3v-3l5 4-5 4v-3h-3z";
  if (isPivot(r.pts, i) || i % 2) draw(core, "path", { d: `M${p[0]} ${p[1]}` + shape, fill: r.color, stroke: r.exit ? "#fff" : "none" });
}));

/* tester graph */
const eq = byId("equity"), lots = byId("lots");
let grid = "";
for (let y = 697.5; y < 858; y += 32) grid += `M16 ${y}H1850`;
let cols = "", lotCols = "";
for (let x = 48.5; x < 1850; x += 32) { cols += `M${x} 690V858`; lotCols += `M${x} 861V900`; }
draw(eq, "path", { d: grid + cols, stroke: "#c8c8c8", "stroke-dasharray": "4 3" });
draw(lots, "path", { d: lotCols, stroke: "#c8c8c8", "stroke-dasharray": "4 3" });
const flats = `26,37,849 92,105,843 148,163,839 166,182,838 235,248,832 277,290,829 337,360,824 372,388,822 482,490,812 540,570,807
 635,650,800 697,718,794 731,748,792 768,782,790 785,800,789 857,875,784 885,912,783 1040,1054,766 1081,1090,764 1108,1122,762
 1155,1172,757 1262,1275,749 1308,1320,745 1388,1404,738 1489,1507,730 1521,1532,728 1541,1552,726 1582,1592,723 1622,1638,720
 1648,1662,719 1684,1696,717 1726,1738,714 1757,1768,712 1788,1800,710 1836,1848,706`;
draw(eq, "path", {
  d: points(flats).map(([a, b, y]) => `M${a} ${y + .5}H${b}`).join("") + "M1715 715V718.500H1725V714",
  stroke: "#00b000", fill: "none"
});
draw(eq, "path", {
  d: toPath(points(`16,850 24,850 26,847 29,846 35,848 43,849 54,848 59,846 80,846 92,844 96,840 100,841 105,843 115,843 130,841 148,840
 151,835 155,835 162,838 166,839 168,837 175,838 195,836 212,834 235,833 240,830 250,832 270,829 277,829 283,827 290,829 305,827 334,825
 342,823 350,824 362,822 372,823 376,820 385,821 395,822 410,820 430,818 450,815 475,813 487,811 496,812 503,810 525,810 540,808
 546,805 553,807 580,806 590,804 610,803 630,801 641,799 665,797 692,796 702,793 720,793 730,792 733,788 736,787 742,789 752,792 767,791
 771,786 778,787 783,790 788,786 795,787 800,789 815,787 830,787 848,784 856,785 861,782 868,784 888,785 895,782 910,781 925,781
 940,779 968,776 972,772 990,771 1015,769 1039,766 1042,761 1044,760 1052,764 1058,766 1065,764 1080,764 1085,763 1100,763 1115,760
 1125,760 1155,758 1170,756 1190,755 1210,753 1240,751 1265,748 1275,749 1290,747 1312,744 1325,744 1360,742 1375,739 1386,739
 1389,734 1393,733 1400,735 1407,738 1425,736 1443,733 1460,733 1480,731 1488,730 1491,725 1494,724 1500,728 1508,729 1520,728 1525,726 1532,728
 1550,725 1568,726 1582,723 1586,720 1595,723 1605,723 1620,721 1627,717 1635,719 1645,720 1653,717 1662,719 1680,719 1688,715 1698,717
 1710,715 1725,714 1734,712 1742,714 1755,714 1761,709 1768,711 1780,712 1787,710 1792,708 1800,710 1815,709 1830,707 1838,706
 1842,704 1848,706`)),
  stroke: "#0000b4", "stroke-width": 2, fill: "none", "shape-rendering": "crispEdges"
});

/* lot sizes: x,height of each burst */
const bursts = points(`20,1 24,25 55,17 73,1 92,35 109,4 117,1 124,4 134,2 148,35 166,21 180,2 194,7 204,2 211,2 225,1 235,15 255,2 259,6 265,2
 269,7 277,19 293,3 299,12 310,15 323,5 337,26 350,8 361,17 372,21 397,8 416,1 422,5 434,2 444,6 451,2 459,3 465,5 481,15 502,13
 515,4 524,6 540,26 556,10 567,9 585,12 603,4 615,2 630,2 635,17 646,5 656,2 661,2 667,4 696,24 710,13 721,10 730,35
 767,35 784,35 801,8 811,13 832,12 842,8 856,33 879,8 887,17 901,15 923,2 926,4 932,4 938,4 958,6 968,19 980,4 985,7
 994,2 1006,7 1016,2 1038,35 1058,12 1080,10 1107,7 1117,10 1129,8 1137,5 1144,4 1151,8 1164,15 1190,3 1212,7 1227,2
 1238,4 1261,17 1275,2 1288,7 1306,19 1317,2 1321,6 1331,12 1349,4 1363,8 1374,7 1380,5 1388,33 1414,2 1423,6 1432,5
 1439,15 1452,4 1470,2 1489,35 1507,5 1520,24 1534,12 1544,21 1581,33 1601,2 1607,5 1614,6 1623,35 1642,4 1647,24
 1664,3 1683,19 1700,2 1704,10 1724,4 1731,24 1742,6 1756,35 1787,24 1821,7 1836,17`);
let fill = "";
bursts.forEach(([x, top]) => {
  const hold = [148, 767, 1038].includes(x) ? 2 : 0;
  for (let i = 0, h = top; h >= 1; i++) {
    fill += `M${x + i} 899v${-Math.round(h)}h1v${Math.round(h)}z`;
    if (i >= hold) h *= .83;
  }
});
draw(lots, "path", { d: fill, fill: "#00b000", "shape-rendering": "crispEdges" });

/* watermark tiles */
for (let y = 181; y < 1000; y += 250)
  for (let x = 60; x < 1885; x += 250)
    draw(byId("marks"), "text", { transform: `translate(${x} ${y}) rotate(-35)` }, "EAHub.cn");
```
